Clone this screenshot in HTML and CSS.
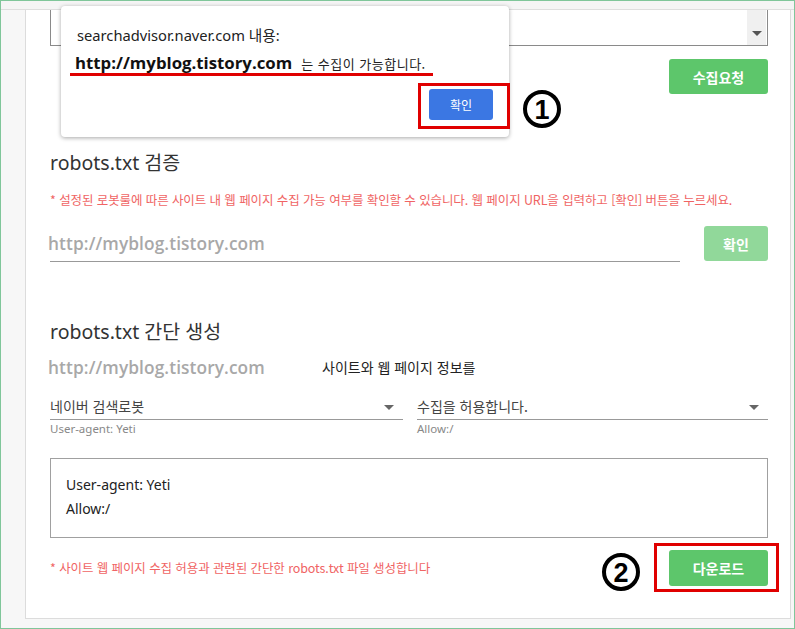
FILE: index.html
```html
<!DOCTYPE html>
<html lang="ko">
<head>
<meta charset="utf-8">
<title>robots.txt</title>
<link rel="stylesheet" href="styles.css">
</head>
<body>
<div class="frame">
  <div class="topstrip"></div>
  <div class="card">
    <div class="listbox">
      <div class="scroll"><span class="tri"></span></div>
    </div>
    <div class="btnrow"><button class="btn">수집요청</button></div>

    <h2 class="heading">robots.txt 검증</h2>
    <p class="note">* 설정된 로봇룰에 따른 사이트 내 웹 페이지 수집 가능 여부를 확인할 수 있습니다. 웹 페이지 URL을 입력하고 [확인] 버튼을 누르세요.</p>
    <div class="checkrow">
      <div class="urlinput"><span class="ph">http://myblog.tistory.com</span></div>
      <button class="btn light">확인</button>
    </div>

    <h2 class="heading h2b">robots.txt 간단 생성</h2>
    <div class="genrow">
      <span class="ph genurl">http://myblog.tistory.com</span>
      <span class="desc">사이트와 웹 페이지 정보를</span>
    </div>
    <div class="selects">
      <div class="sel">
        <div class="selbox"><span>네이버 검색로봇</span><span class="tri"></span></div>
        <div class="help">User-agent: Yeti</div>
      </div>
      <div class="sel">
        <div class="selbox"><span>수집을 허용합니다.</span><span class="tri"></span></div>
        <div class="help">Allow:/</div>
      </div>
    </div>
    <div class="textarea">User-agent: Yeti<br>Allow:/</div>
    <div class="foot">
      <p class="note">* 사이트 웹 페이지 수집 허용과 관련된 간단한 robots.txt 파일 생성합니다</p>
      <button class="btn">다운로드</button>
    </div>
  </div>

  <div class="dialog">
    <div class="dlg-title">searchadvisor.naver.com 내용:</div>
    <div class="dlg-msg"><b class="dlg-url">http://myblog.tistory.com</b><span class="dlg-small">는 수집이 가능합니다.</span></div>
    <button class="dlg-ok">확인</button>
  </div>
  <div class="redbox rb1"></div>
  <div class="redbox rb2"></div>
  <svg class="num n1" width="40" height="40" viewBox="0 0 40 40"><circle cx="20" cy="20" r="17" fill="none" stroke="#000" stroke-width="4"/><text x="20" y="30" text-anchor="middle" class="numtxt">1</text></svg>
  <svg class="num n2" width="40" height="40" viewBox="0 0 40 40"><circle cx="20" cy="20" r="17" fill="none" stroke="#000" stroke-width="4"/><text x="20" y="30" text-anchor="middle" class="numtxt">2</text></svg>
</div>
</body>
</html>
```
FILE: styles.css
```css
* { box-sizing: border-box; }
html, body { margin: 0; padding: 0; }
body {
  font-family: "Noto Sans", "Noto Sans CJK KR", sans-serif;
  color: #333;
}
.frame {
  position: relative;
  width: 795px;
  height: 629px;
  border: 1px solid #80c69a;
  background: #f7f7f7;
  overflow: hidden;
}
.topstrip {
  height: 9px;
  border-bottom: 1px solid #dedede;
  background: #f5f5f5;
}
.card {
  margin-left: 24px;
  width: 766px;
  height: 609px;
  background: #fff;
  border: 1px solid #dcdcdc;
  border-top: none;
  padding: 0 22px 0 24px;
}
.listbox {
  height: 36px;
  border: 1px solid #8a8a8a;
  border-top: none;
  display: flex;
  justify-content: flex-end;
}
.scroll {
  width: 19px;
  margin-right: 1px;
  background: #f0f0f0;
  display: flex;
  align-items: flex-end;
  justify-content: center;
  padding-bottom: 9px;
}
.tri {
  width: 0;
  height: 0;
  border-left: 5px solid transparent;
  border-right: 5px solid transparent;
  border-top: 5px solid #555;
}
.btnrow {
  display: flex;
  justify-content: flex-end;
  margin-top: 13px;
}
.btn {
  width: 99px;
  height: 35px;
  border: none;
  border-radius: 3px;
  background: #5dc66b;
  color: #fff;
  font-family: "Noto Sans CJK KR", sans-serif;
  font-weight: 700;
  font-size: 14px;
  padding: 0;
}
.btn.light {
  width: 64px;
  background: #91d89a;
}
.heading {
  margin: 55px 0 0 0;
  font-size: 19.5px;
  line-height: 28px;
  font-weight: 400;
  color: #333;
}
.h2b { margin-top: 56px; }
.note {
  margin: 14px 0 0 0;
  font-family: "Noto Sans CJK KR", sans-serif;
  font-size: 12.5px;
  line-height: 18px;
  color: #f06464;
  letter-spacing: -0.1px;
}
.checkrow {
  display: flex;
  gap: 24px;
  margin-top: 17px;
  align-items: flex-start;
}
.urlinput {
  width: 630px;
  height: 36px;
  border-bottom: 1px solid #999;
  display: flex;
  align-items: center;
}
.urlinput .ph { margin-left: -2px; }
.ph {
  font-family: "Open Sans", sans-serif;
  font-weight: 600;
  font-size: 17.3px;
  color: #a8a8a8;
  letter-spacing: 0.1px;
}
.genrow {
  display: flex;
  align-items: center;
  margin-top: 9px;
  height: 24px;
  margin-left: -2px;
}
.genurl { width: 274px; }
.desc {
  font-family: "Noto Sans CJK KR", sans-serif;
  font-size: 14px;
  color: #222;
}
.selects {
  display: grid;
  grid-template-columns: 353px 351px;
  column-gap: 14px;
  margin-top: 15px;
}
.selbox {
  height: 26px;
  border-bottom: 1px solid #999;
  display: flex;
  justify-content: space-between;
  align-items: center;
  font-family: "Noto Sans CJK KR", sans-serif;
  font-size: 14px;
  color: #444;
  padding-right: 9px;
  padding-bottom: 2px;
}
.selbox .tri { border-top-color: #666; margin-top: 4px; }
.help {
  margin-top: 2px;
  font-size: 11.5px;
  line-height: 14px;
  color: #888;
}
.textarea {
  margin-top: 22px;
  height: 80px;
  border: 1px solid #a0a0a0;
  padding: 14px 0 0 15px;
  font-size: 14px;
  line-height: 24px;
  color: #222;
}
.foot {
  display: flex;
  justify-content: space-between;
  align-items: center;
  margin-top: 12px;
}
.foot .note { margin: 0; }
.foot .btn { height: 36px; }

/* overlays */
.dialog {
  position: absolute;
  left: 60px;
  top: 5px;
  width: 448px;
  height: 131px;
  background: #fff;
  border-radius: 4px;
  box-shadow: 0 1px 4px rgba(0,0,0,0.35);
  padding: 19px 16px 0 16px;
  display: flex;
  flex-direction: column;
}
.dlg-title {
  font-size: 14.7px;
  line-height: 20px;
  color: #222;
}
.dlg-msg {
  margin-top: 6px;
  margin-left: -7px;
  width: 363px;
  padding-left: 5px;
  border-bottom: 3px solid #e00000;
  display: flex;
  align-items: baseline;
  height: 25px;
}
.dlg-url {
  font-family: "Open Sans", sans-serif;
  font-size: 16.8px;
  font-weight: 700;
  color: #111;
  margin-right: 9px;
}
.dlg-small {
  font-family: "Noto Sans CJK KR", sans-serif;
  font-size: 13px;
  letter-spacing: 0.5px;
  color: #222;
}
.dlg-ok {
  align-self: flex-end;
  margin-top: 13px;
  width: 64px;
  height: 31px;
  border: none;
  border-radius: 3px;
  background: #3b77e3;
  color: #fff;
  font-family: "Noto Sans CJK KR", sans-serif;
  font-size: 12px;
  padding: 0;
}
.redbox {
  position: absolute;
  border: 3px solid #e00000;
}
.rb1 { left: 417px; top: 82px; width: 92px; height: 46px; }
.rb2 { left: 653px; top: 542px; width: 125px; height: 49px; }
.num { position: absolute; }
.n1 { left: 521px; top: 88px; }
.n2 { left: 600px; top: 551px; }
.numtxt {
  font-family: "Liberation Sans", sans-serif;
  font-weight: 700;
  font-size: 27px;
  fill: #000;
}
```
